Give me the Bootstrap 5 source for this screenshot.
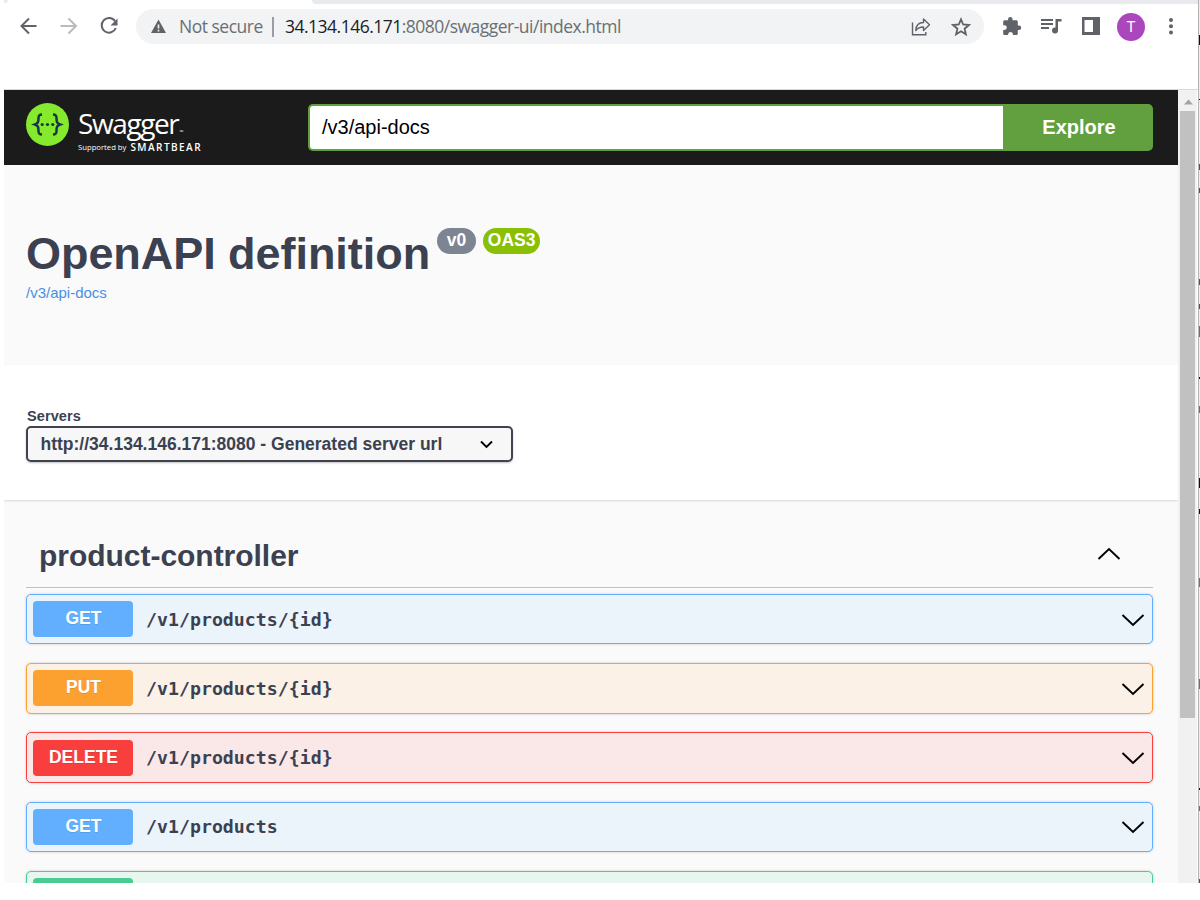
<!DOCTYPE html>
<html lang="en">
<head>
<meta charset="utf-8">
<meta name="viewport" content="width=device-width, initial-scale=1">
<title>Swagger UI</title>
<link href="https://cdn.jsdelivr.net/npm/bootstrap@5.3.0/dist/css/bootstrap.min.css" rel="stylesheet">
<style>
body{font-family:"Liberation Sans",Arial,sans-serif;color:#3b4151;background:#fff;overflow:hidden}
.window{width:1200px;height:883px;padding-left:4px}
.tabstrip{height:4px;width:886px;background:#e8eaed;border-bottom-left-radius:8px}
.tabcorner{width:4px;height:3px;background:#e8eaed;border-bottom-right-radius:4px}
.toolbar{height:85px;padding:5px 0 0 12px}
.toolbar svg{display:block;flex:none}
.toolbar .kebab{margin-left:20px}
.omnibox{width:848px;height:35px;margin-left:8px;padding:0 13px 0 15px;border-radius:18px;background:#f1f3f4;font:17.5px/35px "Open Sans","Noto Sans",sans-serif;color:#6b6f73;white-space:nowrap}
.omnibox .star{margin-left:20px}
.sep{width:2px;height:20px;background:#9a9da1;margin:0 11px 0 9px}
.host{color:#202124}
.insecure{letter-spacing:-.5px;margin-left:13px;width:84px}
.address{letter-spacing:-.51px}
.avatar{width:28px;height:28px;margin:4px 0 0 3px;background:#ab47bc;color:#fff;font:15px/28px Roboto,sans-serif}
.divider{height:1px;background:#d7d9dc}
.page{width:1174px;height:793px;overflow:hidden;background:#fafafa}
.topbar{height:75px;background:#1b1b1b;padding:14px 25px 0 22px}
.brand{width:282px;margin-top:-1px;color:#fff}
.brandtext{margin-left:9px}
.wordmark{font:28px/32px "Open Sans",sans-serif;letter-spacing:-1.4px;padding-top:4px;height:36px}
.supported{font:7.7px/9px "Open Sans",sans-serif;margin-top:4px;white-space:nowrap;display:flex}
.supported b{font:600 10px/9px "Open Sans",sans-serif;letter-spacing:1.45px;margin-left:4px}
.tm{font-size:5px;letter-spacing:0;margin-left:1px}
.spec{width:695px;height:47px;border:2px solid #62a03f;border-right:0;border-radius:5px 0 0 5px;font-size:20px;line-height:42px;padding:0 12px;color:#000}
.explore{width:150px;height:47px;background:#62a03f;color:#fff;font-size:20px;font-weight:700;border:0;border-radius:0 5px 5px 0;padding:0 0 1px 2px}
.info{height:200px;padding:61px 22px 0}
.info h1{font-size:45px;line-height:56px;height:54px;font-weight:700;margin:0;letter-spacing:-.05px}
.pill{height:26px;border-radius:20px;color:#fff;font-size:17.5px;line-height:24px;font-weight:700;margin:2px 0 0 7px;text-align:center}
.version{width:39px;background:#7d8492}
.oas{width:57px;background:#89bf04}
.spec-link{font-size:15px;line-height:18px;color:#4990e2;text-decoration:none;display:block;margin-top:4px}
.servers{height:135px;background:#fff;padding:43px 22px 0;box-shadow:0 1px 2px rgba(0,0,0,.15);position:relative}
.servers label{display:block;font-size:14.5px;line-height:17px;font-weight:700;padding-left:1px;letter-spacing:.1px}
.server-select{width:487px;height:36px;margin-top:1px;border:2px solid #41444e;border-radius:5px;background:#f7f7f7;box-shadow:0 1px 2px rgba(0,0,0,.25);font-size:17.5px;font-weight:700;padding:0 18px 0 12.5px}
.ops{padding:22px 25px 0 22px}
.tag{height:66px;border-bottom:1px solid #bfc1c5;padding:0 32px 0 13px;margin-bottom:6px}
.tag h3{font-size:30px;font-weight:700;line-height:66px;margin:2px 0 0;letter-spacing:-.03px}
.tag svg{margin-top:-2px}
.op{height:50.4px;margin-bottom:18.82px;border:1px solid var(--c);border-radius:5px;background:var(--b);box-shadow:0 0 3px rgba(0,0,0,.19);padding:0 7px 0 6px}
.op svg{margin-top:1px}
.verb{width:100px;height:36px;border-radius:4px;background:var(--c);color:#fff;font-size:17.5px;font-weight:700;line-height:35.6px;text-align:center;text-shadow:0 1px 0 rgba(0,0,0,.1);padding-left:1px}
.route{font:700 18.2px/24px "DejaVu Sans Mono",monospace;margin:1px 0 0 13px;letter-spacing:.03px}
.get{--c:#61affe;--b:#ebf3fb}.put{--c:#fca130;--b:#fbf1e6}.del{--c:#f93e3e;--b:#fae7e7}.post{--c:#49cc90;--b:#e8f6f0}
.scroll{width:20px;height:793px;background:#f1f1f1;border-right:1px solid #fff;padding:0 2px}
.arrow{height:21px;padding:9px 0 0 4px}
.thumb{height:607px;background:#c1c1c1}
.edge{width:2px;height:883px;border-left:1px solid #b4b4b4;background:#ececec}
.edge svg{display:block}
</style>
</head>
<body>
<div class="window d-flex">
<main>
  <header>
    <div class="d-flex"><div class="tabcorner"></div><div class="tabstrip ms-auto"></div></div>
    <nav class="toolbar d-flex align-items-start">
      <svg width="112" height="35" fill="none" stroke="#5f6368" stroke-width="2"><path d="M20.500 17H6M13 9.500 5.500 17l7.500 7.500"/><path stroke="#b9bbbd" d="M44.500 17H60M52.500 9.500 60 17l-7.500 7.500"/><path d="M99 12.200A7.300 7.300 0 1 0 99.800 19"/><path fill="#5f6368" stroke="none" d="M101.500 9.500v7H94.500z"/></svg>
      <div class="omnibox d-flex align-items-center">
        <svg width="15" height="15" viewBox="0 0 15 15"><path fill="#5f6368" d="M7.500.5 15 14H0z"/><path stroke="#f1f3f4" stroke-width="1.600" d="M7.500 5.500v4M7.500 10.800v1.600"/></svg>
        <span class="insecure">Not secure</span><span class="sep"></span>
        <span class="address"><span class="host">34.134.146.171</span>:8080/swagger-ui/index.html</span>
        <svg class="ms-auto" width="20" height="20" fill="none" stroke="#5f6368" stroke-width="1.400"><path d="M1.500 5.500v12.300h13.300V15"/><path stroke-linejoin="round" d="M12.500 2v3.500C7.500 5.500 5 9 4.800 13.500c2-2.700 4.400-3.500 7.700-3.500v3.500l6-5.700z"/></svg>
        <svg class="star" width="20" height="20" viewBox="0 0 20 20" fill="none" stroke="#5f6368" stroke-width="1.800"><path d="m10 2.300 2.200 5.200 5.700.5-4.300 3.700 1.300 5.600-4.900-3-4.900 3 1.300-5.600L2.100 8l5.700-.5z"/></svg>
      </div>
      <svg width="130" height="44" fill="#5f6368"><path transform="translate(0.500 2.500)" d="M34.500 14h-1.200v-3.600c0-.9-.7-1.600-1.600-1.600h-3.700V7.600a2.200 2.200 0 0 0-4.400 0v1.200h-3.300c-.9 0-1.600.7-1.600 1.600v3.300h1.200a2.400 2.400 0 0 1 0 4.800h-1.200v3.400c0 .9.7 1.600 1.600 1.600h3.400v-1.200a2.400 2.400 0 0 1 4.700 0v1.200h3.300c.9 0 1.600-.7 1.600-1.600v-3.500h1.200a2.200 2.200 0 0 0 0-4.400z"/><path d="M57 14h12v2H57zM57 18h12v2H57zM57 22h8v2h-8zM71.500 14h6v2.500h-3.500v9h-2.500z" transform="translate(0 -4)"/><circle cx="71" cy="21.500" r="3"/><path d="M98 12h18v18H98zm2.500 3v12H109V15z" fill-rule="evenodd" transform="translate(0 -4)"/></svg>
      <div class="avatar rounded-circle text-center">T</div>
      <svg class="kebab" width="12" height="35" fill="#5f6368"><circle cx="6" cy="15" r="2" transform="translate(0 -4)"/><circle cx="6" cy="17.300" r="2"/><circle cx="6" cy="23.600" r="2"/></svg>
    </nav>
    <div class="divider"></div>
  </header>
  <div class="d-flex">
  <div class="page">
    <div class="topbar d-flex">
      <div class="brand d-flex">
        <svg width="43" height="43" class="flex-shrink-0"><circle cx="21.500" cy="21.500" r="21.500" fill="#85ea2d"/><g fill="none" stroke="#173647" stroke-width="2.500"><path d="M16 11.500c-3 0-3.500 1-3.500 3.500 0 4-.5 5.500-3.500 6.500 3 1 3.500 2.500 3.500 6.500 0 2.500.5 3.500 3.500 3.500M27 11.500c3 0 3.500 1 3.500 3.500 0 4 .5 5.500 3.500 6.500-3 1-3.500 2.500-3.500 6.500 0 2.500-.5 3.500-3.500 3.500"/></g><g fill="#173647"><circle cx="16.200" cy="21.500" r="1.600"/><circle cx="21.500" cy="21.500" r="1.600"/><circle cx="26.800" cy="21.500" r="1.600"/></g></svg>
        <div class="brandtext"><div class="wordmark">Swagger<span class="tm">™</span></div><div class="supported"><span>Supported by</span><b>SMARTBEAR</b></div></div>
      </div>
      <div class="spec bg-white">/v3/api-docs</div><button class="explore">Explore</button>
    </div>
    <section class="info">
      <div class="d-flex align-items-start"><h1>OpenAPI definition</h1><span class="pill version">v0</span><span class="pill oas">OAS3</span></div>
      <a class="spec-link" href="#">/v3/api-docs</a>
    </section>
    <section class="servers">
      <label>Servers</label>
      <div class="server-select d-flex align-items-center justify-content-between"><span>http://34.134.146.171:8080 - Generated server url</span><svg width="13" height="9" fill="none" stroke="#000" stroke-width="1.900"><path d="m1 1.500 5.500 5.500L12 1.500"/></svg></div>
    </section>
    <section class="ops">
      <div class="tag d-flex justify-content-between align-items-center"><h3>product-controller</h3><svg width="24" height="14" fill="none" stroke="#000" stroke-width="1.900"><path d="m1.500 12 10.500-10 10.500 10"/></svg></div>
      <div class="op get d-flex align-items-center"><span class="verb">GET</span><span class="route">/v1/products/{id}</span><svg class="ms-auto" width="24" height="14" fill="none" stroke="#000" stroke-width="1.900"><path d="m1.500 2 10.500 10L22.500 2"/></svg></div>
      <div class="op put d-flex align-items-center"><span class="verb">PUT</span><span class="route">/v1/products/{id}</span><svg class="ms-auto" width="24" height="14" fill="none" stroke="#000" stroke-width="1.900"><path d="m1.500 2 10.500 10L22.500 2"/></svg></div>
      <div class="op del d-flex align-items-center"><span class="verb">DELETE</span><span class="route">/v1/products/{id}</span><svg class="ms-auto" width="24" height="14" fill="none" stroke="#000" stroke-width="1.900"><path d="m1.500 2 10.500 10L22.500 2"/></svg></div>
      <div class="op get d-flex align-items-center"><span class="verb">GET</span><span class="route">/v1/products</span><svg class="ms-auto" width="24" height="14" fill="none" stroke="#000" stroke-width="1.900"><path d="m1.500 2 10.500 10L22.500 2"/></svg></div>
      <div class="op post d-flex align-items-center"><span class="verb"></span></div>
    </section>
  </div>
  <div class="scroll"><div class="arrow"><svg class="d-block" width="9" height="6"><path fill="#a3a3a3" d="M0 5.500 4.500.5 9 5.500z"/></svg></div><div class="thumb"></div></div>
  </div>
</main>
<div class="edge"><svg width="1" height="883"><path stroke="#111" stroke-width="1" d="M.5 35v10M.5 99v1M.5 377v2M.5 478v5M.5 483v5M.5 509v5M.5 788v2"/><path stroke="#285b96" d="M.5 164v6M.5 188v5M.5 279v6M.5 304v5M.5 879v4"/><path stroke="#a5651d" d="M.5 326v11M.5 406v7M.5 578v9M.5 679v10M.5 806v5"/></svg></div>
</div>
<script src="https://cdn.jsdelivr.net/npm/bootstrap@5.3.0/dist/js/bootstrap.bundle.min.js"></script>
</body>
</html>
